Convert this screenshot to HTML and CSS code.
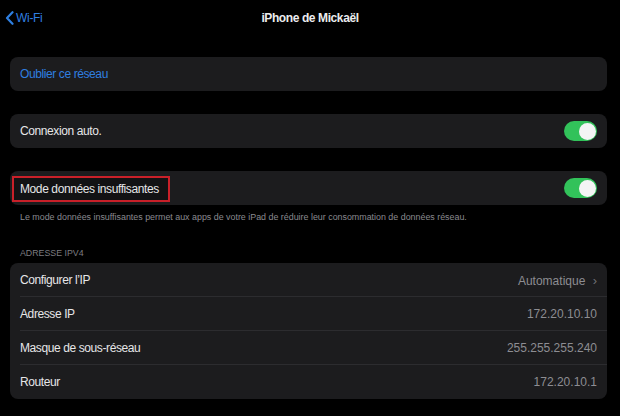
FILE: index.html
```html
<!DOCTYPE html>
<html>
<head>
    <link rel="stylesheet" href="styles.css">
</head>
<body>

<div class="navbar">
    <a class="back" href="#">
        <svg width="9" height="14" viewBox="0 0 9 14"><path d="M7.5 1.2 L2 7 L7.5 12.8" fill="none" stroke="#2f7fe0" stroke-width="2.2" stroke-linecap="round" stroke-linejoin="round"/></svg>
        <span>Wi-Fi</span>
    </a>
    <div class="title">iPhone de Mickaël</div>
</div>

<div class="content">
    <!-- Forget network -->
    <div class="group">
        <div class="row"><span class="link">Oublier ce réseau</span></div>
    </div>

    <!-- Auto join -->
    <div class="group">
        <div class="row">
            <span class="label">Connexion auto.</span>
            <span class="toggle on"><span class="knob"></span></span>
        </div>
    </div>

    <!-- Low data mode -->
    <div class="group">
        <div class="row">
            <span class="label highlight">Mode données insuffisantes</span>
            <span class="toggle on"><span class="knob"></span></span>
        </div>
    </div>
    <p class="footnote">Le mode données insuffisantes permet aux apps de votre iPad de réduire leur consommation de données réseau.</p>

    <!-- IPv4 -->
    <div class="section-title">ADRESSE IPV4</div>
    <div class="group">
        <div class="row sep">
            <span class="label">Configurer l’IP</span>
            <span class="value">Automatique <span class="chevron">&rsaquo;</span></span>
        </div>
        <div class="row sep">
            <span class="label">Adresse IP</span>
            <span class="value">172.20.10.10</span>
        </div>
        <div class="row sep">
            <span class="label">Masque de sous-réseau</span>
            <span class="value">255.255.255.240</span>
        </div>
        <div class="row">
            <span class="label">Routeur</span>
            <span class="value">172.20.10.1</span>
        </div>
    </div>
</div>

</body>
</html>
```

FILE: styles.css
```css
/* General Styling */
body {
    font-family: "Liberation Sans", Arial, sans-serif;
    margin: 0;
    padding: 0;
    background-color: #000;
    color: #e6e6e8;
    width: 620px;
    height: 416px;
    overflow: hidden;
}

/* Top bar */
.navbar {
    height: 36px;
    display: flex;
    align-items: center;
    justify-content: center;
    position: relative;
}

.navbar .back {
    position: absolute;
    left: 5px;
    top: 11px;
    display: flex;
    align-items: center;
    gap: 2px;
    color: #2f7fe0;
    text-decoration: none;
    font-size: 12px;
    letter-spacing: -0.3px;
}

.navbar .title {
    font-size: 12px;
    font-weight: bold;
    color: #ececee;
    letter-spacing: -0.4px;
}

.content {
    padding: 21px 13px 0 10px;
}

.group {
    background-color: #1c1c1e;
    border-radius: 8px;
    margin-bottom: 23px;
}

.row {
    height: 34px;
    display: flex;
    align-items: center;
    justify-content: space-between;
    padding: 0 10px;
    font-size: 12px;
}

.row.sep {
    position: relative;
}

.row.sep::after {
    content: "";
    position: absolute;
    left: 10px;
    right: 0;
    bottom: 0;
    height: 1px;
    background-color: #2c2c2f;
}

.label,
.link {
    letter-spacing: -0.4px;
}

.link {
    color: #2f7fe0;
}

.label.highlight {
    outline: 2px solid #c92029;
    outline-offset: 0;
    background-color: #121214;
    margin-left: -6px;
    padding: 4px 9px 4px 6px;
    position: relative;
    top: 1px;
}

.value {
    color: #8d8d92;
}

.chevron {
    color: #6e6e73;
    margin-left: 4px;
    font-size: 13px;
}

/* Switch */
.toggle {
    width: 33px;
    height: 20px;
    border-radius: 10px;
    background-color: #32c25a;
    position: relative;
    display: inline-block;
}

.toggle .knob {
    position: absolute;
    top: 1.5px;
    right: 1.5px;
    width: 17px;
    height: 17px;
    border-radius: 50%;
    background-color: #f4f4f4;
}

.footnote {
    margin: -16px 0 0 10px;
    font-size: 8.9px;
    color: #8a8a8f;
}

.section-title {
    margin: 26px 0 5px 10px;
    font-size: 8.8px;
    color: #7c7c81;
}
```
